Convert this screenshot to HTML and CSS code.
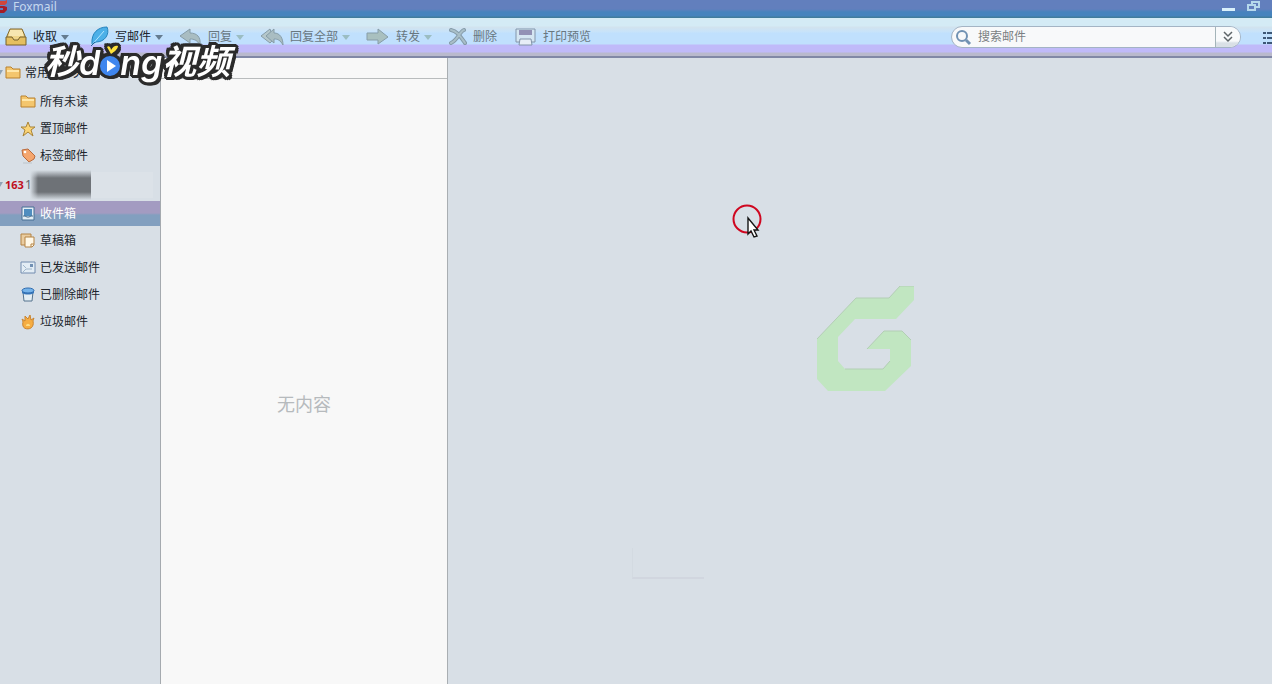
FILE: index.html
```html
<!DOCTYPE html>
<html lang="zh-CN">
<head>
<meta charset="utf-8">
<title>Foxmail</title>
<link rel="stylesheet" href="styles.css">
</head>
<body>
<div class="app">
  <header class="titlebar">
    <svg class="app-icon" width="8" height="14" viewBox="0 0 8 14"><path d="M0 1H5L7 0V3L5 5H0Z" fill="#d0453a"/><path d="M0 6H4L7 7V10L4 13H0V10H3V8H0Z" fill="#a51c26"/></svg>
    <h1 class="app-title">Foxmail</h1>
    <button class="win-btn" aria-label="最小化"><svg width="13" height="12"><path d="M0 8H13V11H0Z" fill="#d9f0fb"/></svg></button>
    <button class="win-btn" aria-label="还原"><svg width="13" height="12" fill="none" stroke="#b5d8ec" stroke-width="2"><path d="M5 5V2H12V7H9"/><path d="M1 5H8V10H1Z"/></svg></button>
  </header>

  <nav class="toolbar">
    <button class="tool tool-first"><svg width="22" height="20" viewBox="0 0 22 20"><path d="M5 2H17L20 9V17H2V9Z" fill="#efd58a" stroke="#80672f"/><path d="M5 4H17M4 6H18M4 8H18" stroke="#fff7d6"/><path d="M1 10H7L9 13H13L15 10H21V18H1Z" fill="#e5bf61" stroke="#77602d" stroke-linejoin="round"/></svg><span>收取</span><i class="caret"></i></button>
    <button class="tool"><svg width="19" height="22" viewBox="0 0 19 22"><path d="M2 18C1 7 8 1 17 1C20 8 15 16 6 16Z" fill="#4cb0e8" stroke="#2584bd"/><path d="M1 20L14 5" stroke="#b2e7ff" stroke-width="1"/><path d="M1 20L5 16" stroke="#246697"/></svg><span>写邮件</span><i class="caret"></i></button>
    <button class="tool muted"><svg width="23" height="20" viewBox="0 0 23 20"><path d="M1 9L11 2V6C18 6 22 10 21 18C18 13 15 12 11 12V16Z" fill="#a9bdc2" stroke="#879da8"/></svg><span>回复</span><i class="caret"></i></button>
    <button class="tool muted"><svg width="24" height="20" viewBox="0 0 24 20"><path d="M1 9L10 2L11 5L7 9L12 14L10 16Z" fill="#b5c7ca" stroke="#879da8"/><path d="M6 9L14 2V6C20 6 23 11 23 18C20 13 18 12 14 12V16Z" fill="#a9bdc2" stroke="#879da8"/></svg><span>回复全部</span><i class="caret"></i></button>
    <button class="tool muted"><svg width="24" height="20" viewBox="0 0 24 20"><path d="M1 6H12V2L22 10L12 17V13H1Z" fill="#a9c0bf" stroke="#879da8"/></svg><span>转发</span><i class="caret"></i></button>
    <button class="tool muted"><svg width="19" height="20" viewBox="0 0 19 20" fill="none" stroke-linecap="round" stroke-linejoin="round"><path d="M3 3C9 4 12 9 17 16M16 3C11 5 10 13 3 16" stroke="#849aa8" stroke-width="4"/><path d="M3 3C9 4 12 9 17 16M16 3C11 5 10 13 3 16" stroke="#a9bfc8" stroke-width="2"/></svg><span>删除</span></button>
    <button class="tool muted"><svg width="24" height="20" viewBox="0 0 24 20"><path d="M3 2H22V15H3Z" fill="#d5e6f2" stroke="#8295aa"/><path d="M6 3H19V8H6Z" fill="#9291b5"/><path d="M7 12H18L19 18H6Z" fill="#e7eef7" stroke="#8295aa"/></svg><span>打印预览</span></button>
    <form class="search" role="search">
      <svg class="search-icon" width="18" height="18" viewBox="0 0 18 18" fill="none" stroke="#7192b3"><circle cx="8" cy="7" r="5" stroke-width="2"/><path d="M12 11L16 15" stroke-width="3"/></svg>
      <input class="search-input" type="search" placeholder="搜索邮件" aria-label="搜索邮件">
      <button class="search-more" type="button" aria-label="搜索选项"><svg width="10" height="12" fill="none" stroke="#5d6468" stroke-width="1.5"><path d="M1 1L5 5L9 1M1 6L5 10L9 6"/></svg></button>
    </form>
    <button class="list-btn" aria-label="菜单"><svg width="9" height="14" fill="#3e5877"><path d="M0 1H3V3H0ZM4 1H9V3H4ZM0 6H3V8H0ZM4 6H9V8H4ZM0 11H3V13H0ZM4 11H9V13H4Z"/></svg></button>
  </nav>

  <main class="panes">
    <aside class="sidebar">
      <div class="group">
        <svg class="twisty" width="3" height="6"><path d="M0 0H3L0 5Z" fill="#8fa3b5"/></svg>
        <svg width="16" height="16" viewBox="0 0 16 16"><path d="M1 13V2H6L8 4H15V13Z" fill="#f4c66d" stroke="#b9812f"/><path d="M2 6H14" stroke="#ffe7a8" stroke-width="2"/></svg>
        <span>常用文件夹</span>
      </div>
      <a class="folder" href="#"><svg width="16" height="16" viewBox="0 0 16 16"><path d="M1 13V2H6L8 4H15V13Z" fill="#f4c66d" stroke="#b9812f"/><path d="M2 6H14" stroke="#ffe7a8" stroke-width="2"/></svg><span>所有未读</span></a>
      <a class="folder" href="#"><svg width="16" height="16" viewBox="0 0 16 16"><path d="M8 1L10 6H15L11 9L13 15L8 11L3 15L5 9L1 6H6Z" fill="#fbd476" stroke="#a98439"/></svg><span>置顶邮件</span></a>
      <a class="folder" href="#"><svg width="16" height="16" viewBox="0 0 16 16"><path d="M2 2L8 1L15 8L14 11L9 14L3 8Z" fill="#f5a66e" stroke="#b96b3e"/><circle cx="5" cy="4" r="1.3" fill="#fff"/><path d="M3 15H12" stroke="#bcc4c9"/></svg><span>标签邮件</span></a>
      <div class="account"><svg class="twisty" width="3" height="6"><path d="M0 0H3L0 5Z" fill="#8fa3b5"/></svg><b>163</b><span class="account-name">1</span><span class="account-mask"></span><span class="account-tail"></span></div>
      <a class="folder selected" href="#" aria-current="page"><svg width="16" height="16" viewBox="0 0 16 16"><path d="M2 1H14V14H2Z" fill="#e2edf4" stroke="#476e94"/><path d="M4 3H12V10H4Z" fill="#4f8dbf"/><path d="M3 10H5L7 11H9L11 10H13" fill="none" stroke="#426889"/></svg><span>收件箱</span></a>
      <a class="folder" href="#"><svg width="16" height="16" viewBox="0 0 16 16"><path d="M1 1H11V12H1Z" fill="#e9cca0" stroke="#b48345"/><path d="M5 4H14V12L12 14H5Z" fill="#fff8e8" stroke="#b48345"/><path d="M11 14V11H14" fill="none" stroke="#b48345"/></svg><span>草稿箱</span></a>
      <a class="folder" href="#"><svg width="16" height="16" viewBox="0 0 16 16"><path d="M1 2H15V13H1Z" fill="#e3edf5" stroke="#728caf"/><path d="M10 4H13V7H10Z" fill="#7190b3"/><path d="M6 9H12M3 12L6 9M3 5L6 8" stroke="#a0b6ca"/></svg><span>已发送邮件</span></a>
      <a class="folder" href="#"><svg width="16" height="16" viewBox="0 0 16 16"><path d="M3 5H13L12 14H4Z" fill="#e3edf3" stroke="#55738d"/><path d="M2 3V6C5 8 11 8 14 6V3" fill="#3978bd"/><ellipse cx="8" cy="3.5" rx="6" ry="2.5" fill="#75b3ea" stroke="#2f6bae"/></svg><span>已删除邮件</span></a>
      <a class="folder" href="#"><svg width="16" height="16" viewBox="0 0 16 16"><path d="M2 5L5 7L5 2L8 5L10 1L11 6L14 4C12 7 14 9 13 11C12 16 4 16 3 12C2 9 4 8 2 5Z" fill="#f6ad42" stroke="#c98532"/><path d="M6 12C6 9 10 9 10 12" fill="#ffdc82"/></svg><span>垃圾邮件</span></a>
    </aside>
    <section class="mail-list">
      <div class="list-head"></div>
      <p class="empty">无内容</p>
    </section>
    <section class="reader">
      <svg class="logo" width="98" height="106" viewBox="0 0 98 106"><path d="M39 12H72L83 0H97V14L79 33H38L21 51V75L28 83H66L73 75V63H50L67 45H85L94 54V80L68 105H11L0 93V53Z" fill="#c1e6c1"/><path d="M0 53L39 12H72L83 0H97M50 63L67 45H85L94 54M28 83H66L73 75" fill="none" stroke="#b3ceb5"/></svg>
      <i class="corner"></i>
    </section>
  </main>

  <div class="watermark">
    <span>秒</span><span class="latin">d</span><svg class="play" width="20" height="38" viewBox="0 0 20 38"><circle cx="10" cy="25" r="10" fill="#3f86ee"/><path d="M7 19L16 25L7 31Z" fill="#fff"/><path d="M7 6C9 4 11 7 11 9C13 5 16 4 18 5C18 8 14 11 11 13Z" fill="#ffe33c"/></svg><span class="latin">ng</span><span>视频</span>
  </div>
  <svg class="pointer" width="32" height="38" viewBox="0 0 32 38"><circle cx="15" cy="17" r="13.5" fill="none" stroke="#cf0720" stroke-width="2"/><path d="M16 16V32L19 29L22 35L25 34L22 28H26Z" fill="#fff" stroke="#151515" stroke-width="1.4"/></svg>
</div>
</body>
</html>
```
FILE: styles.css
```css
* { box-sizing: border-box; }
body {
  margin: 0;
  font: 12px/18px "Noto Sans", "Noto Sans CJK SC", sans-serif;
  color: #20252c;
}
button {
  padding: 0;
  border: 0;
  background: none;
  font: inherit;
  color: inherit;
}
svg { display: block; flex: none; }
.app {
  position: relative;
  display: flex;
  flex-direction: column;
  height: 100vh;
  overflow: hidden;
  background: #d8dfe6;
}
.titlebar {
  display: flex;
  align-items: flex-start;
  height: 18px;
  padding-right: 12px;
  background: linear-gradient(#627fbd 0 9px, #4683bd 12px 16px, #417c9c 17px);
}
.app-title {
  flex: 1;
  margin: 0 0 0 5px;
  font: 12px/14px "Noto Sans", sans-serif;
  color: #c5d8ee;
}
.win-btn { margin-left: 12px; }
.toolbar {
  display: flex;
  align-items: flex-start;
  gap: 16px;
  height: 40px;
  padding: 8px 0 0 5px;
  border-bottom: 2px solid #8188a6;
  background: linear-gradient(#d4ebf5 0 8px, #d2e3ee 9px, #c7e3fa 14px, #c0e0fd 15px 26px, #c0baf9 27px 34px, #b9b9cd 35px);
}
.tool {
  display: flex;
  align-items: center;
  gap: 6px;
  height: 22px;
  white-space: nowrap;
}
.tool-first { margin-right: 5px; }
.muted { color: #68777f; }
.caret {
  margin-left: -2px;
  border: 4px solid transparent;
  border-top: 5px solid #657c90;
  border-bottom: 0;
}
.muted .caret { border-top-color: #9bbdc2; }
.search {
  display: flex;
  width: 290px;
  height: 22px;
  margin: 0 6px 0 auto;
  border: 1px solid #a4b4c4;
  border-radius: 11px;
  background: #f8f9fa;
  overflow: hidden;
}
.search-icon { margin: 2px 0 0 2px; }
.search-input {
  flex: 1;
  min-width: 0;
  padding: 0 6px;
  border: 0;
  outline: 0;
  background: none;
  font: inherit;
}
.search-input::placeholder { color: #7b8082; }
.search-more {
  display: flex;
  align-items: center;
  justify-content: center;
  width: 25px;
  border-left: 1px solid #a4b4b9;
  background: linear-gradient(#f8fafb 0 14px, #d9e0e6 16px);
}
.list-btn { padding-top: 5px; }
.panes { display: flex; flex: 1; min-height: 0; }
.sidebar {
  width: 161px;
  border-right: 1px solid #a5aaaf;
}
.group, .folder, .account { display: flex; align-items: center; }
.group {
  gap: 4px;
  height: 30px;
}
.group .twisty { margin-right: -2px; }
.folder {
  gap: 4px;
  height: 27px;
  padding-left: 20px;
  color: inherit;
  text-decoration: none;
}
.account { height: 32px; }
.account b {
  width: 20px;
  margin-left: 2px;
  font: bold 11px/16px "Noto Sans", sans-serif;
  color: #c00e20;
}
.account-name { width: 5px; color: #60656b; }
.account-mask {
  width: 61px;
  height: 30px;
  background:
    linear-gradient(#d8dfe6 0, #d8dfe600 8px 22px, #d8dfe6 30px),
    linear-gradient(90deg, #6e727700, #6e7277 8px);
}
.account-tail { width: 62px; height: 26px; background: #dce2e8; }
.selected {
  height: 25px;
  margin-bottom: 1px;
  background: linear-gradient(#a39bc1 0 12px, #829fbf 14px);
  color: #fff;
}
.mail-list {
  display: flex;
  flex-direction: column;
  width: 287px;
  border-right: 1px solid #a9aeb2;
  background: #f8f8f8;
}
.list-head { height: 21px; border-bottom: 1px solid #b9bcbd; }
.empty {
  display: flex;
  flex: 1;
  align-items: center;
  justify-content: center;
  margin: 0;
  padding-top: 44px;
  font-size: 18px;
  line-height: 28px;
  color: #b6babd;
}
.reader {
  position: relative;
  display: flex;
  flex: 1;
  align-items: center;
  justify-content: center;
  padding: 0 0 64px 11px;
}
.corner {
  position: absolute;
  left: 184px;
  top: 490px;
  width: 72px;
  height: 31px;
  border-left: 1px solid #d3dae1;
  border-bottom: 2px solid #d1d6df;
}
.watermark {
  position: absolute;
  left: 45px;
  top: 38px;
  display: flex;
  align-items: center;
  height: 44px;
  font: italic 700 34px/42px "Noto Sans CJK SC", sans-serif;
  color: #fff;
  filter: drop-shadow(2px 0 #2b2b2b) drop-shadow(-2px 0 #2b2b2b) drop-shadow(0 2px #2b2b2b) drop-shadow(0 -2px #2b2b2b) drop-shadow(1px 1px #2b2b2b) drop-shadow(-1px -1px #2b2b2b);
  white-space: nowrap;
}
.latin {
  padding-top: 6px;
  font-family: Inter, sans-serif;
  font-weight: 600;
}
.pointer { position: absolute; left: 732px; top: 202px; }
```
